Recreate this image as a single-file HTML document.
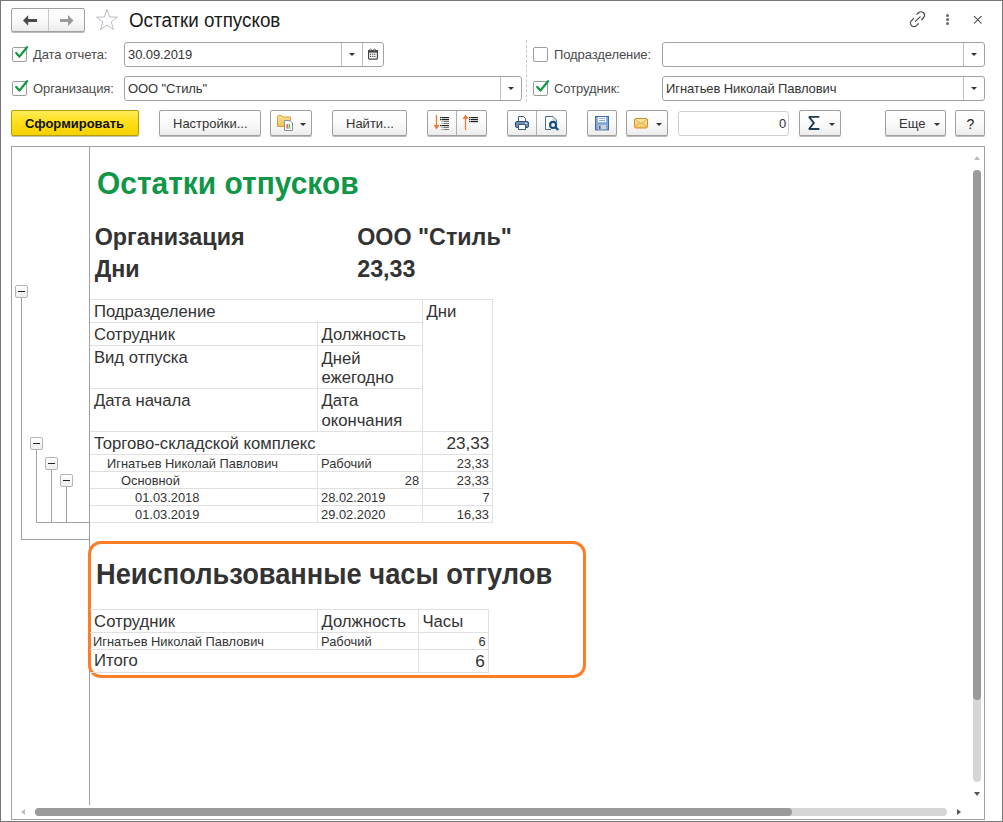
<!DOCTYPE html>
<html><head><meta charset="utf-8">
<style>
*{box-sizing:border-box;margin:0;padding:0}
html,body{width:1003px;height:822px;overflow:hidden;background:#fff;font-family:"Liberation Sans",sans-serif}
.a{position:absolute}
.t{position:absolute;white-space:nowrap;line-height:1}
#win{position:absolute;left:0;top:0;width:1003px;height:822px;border:1px solid #777;background:#fff}
.btn{position:absolute;border:1px solid #a0a0a0;border-radius:2px;background:linear-gradient(#fff 0%,#fafafa 50%,#ececec 100%);box-shadow:0 1px 0 rgba(0,0,0,.28)}
.inp{position:absolute;border:1px solid #a2a2a2;border-radius:3px;background:#fff}
.lbl{position:absolute;white-space:nowrap;line-height:1;font-size:13px;color:#4a4a4a;letter-spacing:-0.1px}
.cb{position:absolute;width:15px;height:15px;border:1px solid #9c9c9c;border-radius:2px;background:#fff}
.dd{position:absolute;width:0;height:0;border-left:3px solid transparent;border-right:3px solid transparent;border-top:3.2px solid #333}
.grid{position:absolute;background:#e0e0e0}
.tree{position:absolute;background:#a0a0a0}
.tb{position:absolute;width:13px;height:13px;border:1px solid #b5b5b5;border-radius:2px;background:linear-gradient(#fff,#eee)}
.tb:after{content:"";position:absolute;left:2px;top:5px;width:7px;height:1px;background:#222}
.rt{position:absolute;white-space:nowrap;line-height:1;color:#333}
</style></head><body>
<div id="win"></div>

<!-- nav -->
<div class="btn" style="left:11px;top:8px;width:74px;height:24px"></div>
<div class="a" style="left:48px;top:9px;width:1px;height:22px;background:#c8c8c8"></div>
<svg class="a" style="left:22px;top:14px" width="16" height="13" viewBox="0 0 16 13"><path d="M1 6.5 L6.2 1.2 L6.2 5 L15 5 L15 8 L6.2 8 L6.2 11.8 Z" fill="#4a4a4a"/></svg>
<svg class="a" style="left:58px;top:14px" width="16" height="13" viewBox="0 0 16 13"><path d="M15.5 6.5 L10 1 L10 5 L2 5 L2 8 L10 8 L10 12 Z" fill="#9a9a9a"/></svg>
<svg class="a" style="left:95px;top:8px" width="24" height="24" viewBox="0 0 24 24"><path d="M12 1.5 L14.6 9 L22.5 9.1 L16.2 13.9 L18.5 21.5 L12 17 L5.5 21.5 L7.8 13.9 L1.5 9.1 L9.4 9 Z" fill="none" stroke="#b8bcc4" stroke-width="1"/></svg>
<div class="t" style="left:128.7px;top:9.5px;font-size:20px;color:#1a1a1a;transform:scaleX(0.94);transform-origin:0 0">Остатки отпусков</div>
<svg class="a" style="left:909px;top:11px" width="18" height="18" viewBox="0 0 18 18"><g fill="none" stroke="#4a4a4a" stroke-width="1.25" stroke-linecap="round"><path d="M6.4 10.4 L11.1 5.9"/><path d="M7.9 3.4 L9.5 1.8 A3.5 3.5 0 0 1 14.5 6.8 L12.6 8.7"/><path d="M4.5 7.6 L2.5 9.6 A3.5 3.5 0 0 0 7.5 14.6 L9.3 12.8"/></g></svg>
<div class="a" style="left:946px;top:14px;width:3px;height:3px;border-radius:2px;background:#6a6a6a"></div>
<div class="a" style="left:946px;top:17.8px;width:3px;height:3px;border-radius:2px;background:#6a6a6a"></div>
<div class="a" style="left:946px;top:21.5px;width:3px;height:3px;border-radius:2px;background:#6a6a6a"></div>
<svg class="a" style="left:972px;top:14px" width="11" height="11" viewBox="0 0 11 11"><path d="M2 2 L9.5 9.5 M9.5 2 L2 9.5" stroke="#333" stroke-width="1.05"/></svg>

<!-- row1 -->
<div class="cb" style="left:12px;top:47px"></div>
<svg class="a" style="left:13px;top:44px" width="16" height="16" viewBox="0 0 16 16"><path d="M3.2 9 L6.4 12.6 L14 3.2" fill="none" stroke="#0f9a40" stroke-width="2.3" stroke-linecap="round" stroke-linejoin="round"/></svg>
<div class="lbl" style="left:33px;top:48px">Дата отчета:</div>
<div class="inp" style="left:124px;top:42px;width:260px;height:25px"></div>
<div class="a" style="left:341px;top:43px;width:1px;height:23px;background:#bdbdbd"></div>
<div class="a" style="left:362px;top:43px;width:1px;height:23px;background:#bdbdbd"></div>
<div class="dd" style="left:349px;top:53px"></div>
<svg class="a" style="left:367px;top:48px" width="11" height="12" viewBox="0 0 11 12"><rect x="1.6" y="2.6" width="8.8" height="8.6" rx="1" fill="#fff" stroke="#444" stroke-width="1.2"/><rect x="1" y="2" width="10" height="2.6" fill="#444"/><circle cx="3.6" cy="1.8" r="0.9" fill="#fff" stroke="#444" stroke-width="0.7"/><circle cx="7.6" cy="1.8" r="0.9" fill="#fff" stroke="#444" stroke-width="0.7"/><g fill="#444"><rect x="3" y="5.6" width="1.2" height="1.2"/><rect x="5.1" y="5.6" width="1.2" height="1.2"/><rect x="7.2" y="5.6" width="1.2" height="1.2"/><rect x="3" y="7.8" width="1.2" height="1.2"/><rect x="5.1" y="7.8" width="1.2" height="1.2"/><rect x="7.2" y="7.8" width="1.2" height="1.2"/></g></svg>
<div class="lbl" style="left:128px;top:48px;color:#333">30.09.2019</div>

<div class="a" style="left:526px;top:40px;width:0;height:62px;border-left:1px dashed #c8c8c8"></div>
<div class="cb" style="left:533px;top:47px"></div>
<div class="lbl" style="left:554px;top:48px">Подразделение:</div>
<div class="inp" style="left:662px;top:42px;width:323px;height:25px"></div>
<div class="a" style="left:963px;top:43px;width:1px;height:23px;background:#bdbdbd"></div>
<div class="dd" style="left:971px;top:53px"></div>

<!-- row2 -->
<div class="cb" style="left:12px;top:81px"></div>
<svg class="a" style="left:13px;top:78px" width="16" height="16" viewBox="0 0 16 16"><path d="M3.2 9 L6.4 12.6 L14 3.2" fill="none" stroke="#0f9a40" stroke-width="2.3" stroke-linecap="round" stroke-linejoin="round"/></svg>
<div class="lbl" style="left:33px;top:82px">Организация:</div>
<div class="inp" style="left:124px;top:76px;width:398px;height:25px"></div>
<div class="a" style="left:500px;top:77px;width:1px;height:23px;background:#bdbdbd"></div>
<div class="dd" style="left:508px;top:87px"></div>
<div class="lbl" style="left:128px;top:82px;color:#333">ООО "Стиль"</div>

<div class="cb" style="left:533px;top:81px"></div>
<svg class="a" style="left:534px;top:78px" width="16" height="16" viewBox="0 0 16 16"><path d="M3.2 9 L6.4 12.6 L14 3.2" fill="none" stroke="#0f9a40" stroke-width="2.3" stroke-linecap="round" stroke-linejoin="round"/></svg>
<div class="lbl" style="left:554px;top:82px">Сотрудник:</div>
<div class="inp" style="left:662px;top:76px;width:323px;height:25px"></div>
<div class="a" style="left:963px;top:77px;width:1px;height:23px;background:#bdbdbd"></div>
<div class="dd" style="left:971px;top:87px"></div>
<div class="lbl" style="left:666px;top:82px;color:#333">Игнатьев Николай Павлович</div>

<!-- toolbar -->
<div class="a" style="left:11px;top:110px;width:128px;height:26px;border:1px solid #b59c00;border-radius:2px;background:linear-gradient(#ffec5a 0%,#ffe01a 45%,#f3d000 100%);box-shadow:0 1px 0 rgba(60,50,0,.3)"></div>
<div class="t" style="left:25px;top:116.5px;font-size:13px;font-weight:bold;color:#111;transform:scaleY(1.05)">Сформировать</div>
<div class="btn" style="left:159px;top:110px;width:102px;height:26px"></div>
<div class="t" style="left:173px;top:117px;font-size:13px;color:#333">Настройки...</div>
<div class="btn" style="left:270px;top:110px;width:42px;height:26px"></div>
<svg class="a" style="left:276px;top:114px" width="20" height="18" viewBox="0 0 20 18"><defs><linearGradient id="fg" x1="0" y1="0" x2="0" y2="1"><stop offset="0" stop-color="#fbe08f"/><stop offset="1" stop-color="#efc25c"/></linearGradient></defs><path d="M1.5 12.5 V3 Q1.5 1.5 3 1.5 H5.5 L7 3 H14.5 V12.5 Z" fill="url(#fg)" stroke="#d8a23e" stroke-width="1"/><path d="M2 4.5 H14" stroke="#f7d885" stroke-width="1"/><path d="M8.5 6.5 H14 L16.5 9 V16.5 H8.5 Z" fill="#fff" stroke="#7d8fa0" stroke-width="1"/><rect x="10.6" y="10" width="1.2" height="4" fill="#f33"/><rect x="12.6" y="10" width="1.3" height="4" fill="#3c3"/><path d="M10 14.4 H15" stroke="#999" stroke-width="0.5"/></svg>
<div class="dd" style="left:300px;top:123px"></div>
<div class="btn" style="left:332px;top:110px;width:75px;height:26px"></div>
<div class="t" style="left:346px;top:117px;font-size:13px;color:#333">Найти...</div>
<div class="btn" style="left:427px;top:110px;width:60px;height:26px"></div>
<div class="a" style="left:456px;top:111px;width:1px;height:24px;background:#b0b0b0"></div>
<svg class="a" style="left:432px;top:114px" width="20" height="18" viewBox="0 0 20 18"><path d="M4.5 1 v13" stroke="#f07a30" stroke-width="1.3"/><path d="M1.5 11 L4.5 15.5 L7.5 11 z" fill="#f07a30"/><g fill="#222"><rect x="8" y="3" width="1.5" height="1.2"/><rect x="10" y="3" width="7" height="1.2"/><rect x="8" y="5" width="1.5" height="1.2"/><rect x="10" y="5" width="7" height="1.2"/><rect x="8" y="11" width="1.5" height="1.2"/><rect x="10" y="11" width="7" height="1.2"/></g><g fill="#777"><rect x="9.5" y="7" width="1" height="1"/><rect x="11.5" y="7" width="5.5" height="1"/><rect x="9.5" y="9" width="1" height="1"/><rect x="11.5" y="9" width="5.5" height="1"/><rect x="9.5" y="13" width="1" height="1"/><rect x="11.5" y="13" width="5.5" height="1"/><rect x="9.5" y="15" width="1" height="1"/><rect x="11.5" y="15" width="5.5" height="1"/></g></svg>
<svg class="a" style="left:461px;top:114px" width="20" height="18" viewBox="0 0 20 18"><path d="M4.5 3 v13" stroke="#f07a30" stroke-width="1.3"/><path d="M1.5 5 L4.5 0.5 L7.5 5 z" fill="#f07a30"/><g fill="#222"><rect x="8" y="3" width="1.5" height="1.2"/><rect x="10" y="3" width="7" height="1.2"/><rect x="8" y="5" width="1.5" height="1.2"/><rect x="10" y="5" width="7" height="1.2"/><rect x="8" y="7" width="1.5" height="1.2"/><rect x="10" y="7" width="7" height="1.2"/></g></svg>
<div class="btn" style="left:507px;top:110px;width:60px;height:26px"></div>
<div class="a" style="left:536px;top:111px;width:1px;height:24px;background:#b0b0b0"></div>
<svg class="a" style="left:514px;top:115px" width="16" height="16" viewBox="0 0 16 16"><path d="M4.5 1.5 h5 l2 2 v3 h-7 z" fill="#fff" stroke="#3d5d80" stroke-width="1"/><rect x="1.5" y="6.5" width="13" height="6" rx="1.5" fill="#6e90b8" stroke="#2e4f78" stroke-width="1"/><rect x="4.5" y="9.5" width="7" height="5" fill="#fff" stroke="#3d5d80" stroke-width="1"/><rect x="11" y="7.8" width="2" height="1" fill="#fff"/></svg>
<svg class="a" style="left:543px;top:115px" width="18" height="17" viewBox="0 0 18 17"><path d="M2.5 1.5 h7.5 l3.5 3.5 v9.5 h-11 z" fill="#fff"/><path d="M8 14.5 H2.5 V1.5 h7.5 l3.5 3.5 v2" fill="none" stroke="#4d6a88" stroke-width="1"/><path d="M10 1.5 v3.5 h3.5" fill="none" stroke="#9fb0c0" stroke-width="0.8"/><circle cx="10.1" cy="9.9" r="3" fill="#fff" stroke="#14507e" stroke-width="2.2"/><path d="M12.4 12.2 L15.2 15" stroke="#14507e" stroke-width="2.4"/></svg>
<div class="btn" style="left:587px;top:110px;width:30px;height:26px"></div>
<svg class="a" style="left:594px;top:115px" width="16" height="16" viewBox="0 0 16 16"><rect x="1.5" y="1.5" width="13" height="13.4" fill="#7da6da" stroke="#3e6aa6" stroke-width="1"/><rect x="3.8" y="2" width="8.4" height="5.2" fill="#fff"/><path d="M5 3.6 h6 M5 5.5 h6" stroke="#7aa2d6" stroke-width="0.9"/><rect x="3.8" y="9.8" width="8.4" height="4.6" fill="#cdd3d6"/><rect x="4.8" y="10.6" width="1.8" height="3.4" fill="#3e6aa6"/></svg>
<div class="btn" style="left:626px;top:110px;width:42px;height:26px"></div>
<svg class="a" style="left:633px;top:117px" width="16" height="12" viewBox="0 0 16 12"><defs><linearGradient id="eg" x1="0" y1="0" x2="0" y2="1"><stop offset="0" stop-color="#fde7ae"/><stop offset="1" stop-color="#f2c463"/></linearGradient></defs><rect x="1.5" y="1.5" width="13" height="9.5" rx="1.5" fill="url(#eg)" stroke="#d18d22" stroke-width="1"/><path d="M2.2 2.2 L8 6.8 L13.8 2.2 M2.5 10.3 L6.3 5.8 M13.5 10.3 L9.7 5.8" fill="none" stroke="#d9a047" stroke-width=".8"/></svg>
<div class="dd" style="left:656px;top:123px"></div>
<div class="a" style="left:678px;top:111px;width:111px;height:25px;border:1px solid #d0d0d0;border-radius:3px;background:#fff"></div>
<div class="t" style="left:779px;top:117px;font-size:13px;color:#333">0</div>
<div class="btn" style="left:799px;top:110px;width:42px;height:26px"></div>
<svg class="a" style="left:807px;top:115px" width="14" height="16" viewBox="0 0 14 16"><path d="M12.3 1.8 H2 L6.9 7.9 L2 14 H12.3" fill="none" stroke="#1f3a4d" stroke-width="1.85" stroke-linejoin="miter" stroke-miterlimit="2"/></svg>
<div class="dd" style="left:829px;top:123px"></div>
<div class="btn" style="left:885px;top:110px;width:61px;height:26px"></div>
<div class="t" style="left:899px;top:117px;font-size:13px;color:#333">Еще</div>
<div class="dd" style="left:934px;top:123px"></div>
<div class="btn" style="left:955px;top:110px;width:30px;height:26px"></div>
<div class="t" style="left:966.5px;top:116.5px;font-size:14px;color:#222">?</div>

<!-- report frame -->
<div class="a" style="left:11px;top:146px;width:974px;height:674px;border:1px solid #a0a0a0"></div>
<div class="a" style="left:89px;top:147px;width:1px;height:658px;background:#a0a0a0"></div>
<div class="a" style="left:974px;top:156px;width:0;height:0;border-left:3px solid transparent;border-right:3px solid transparent;border-bottom:4px solid #bdbdbd"></div>
<div class="a" style="left:973px;top:170px;width:8px;height:612px;border-radius:4px;background:#d6d6d6"></div>
<div class="a" style="left:973px;top:170px;width:8px;height:530px;border-radius:4px;background:#9a9a9a"></div>
<div class="a" style="left:974px;top:792px;width:0;height:0;border-left:3px solid transparent;border-right:3px solid transparent;border-top:4px solid #555"></div>
<div class="a" style="left:21px;top:809px;width:0;height:0;border-top:3px solid transparent;border-bottom:3px solid transparent;border-right:4px solid #bdbdbd"></div>
<div class="a" style="left:35px;top:808px;width:912px;height:8px;border-radius:4px;background:#d6d6d6"></div>
<div class="a" style="left:35px;top:808px;width:757px;height:8px;border-radius:4px;background:#9a9a9a"></div>
<div class="a" style="left:957px;top:809px;width:0;height:0;border-top:3px solid transparent;border-bottom:3px solid transparent;border-left:4px solid #555"></div>

<!-- report -->
<div class="a" style="left:88px;top:541px;width:498px;height:137px;border:3px solid #fd7c26;border-radius:13px;background:#fff"></div>
<div class="grid" style="left:90px;top:299px;width:403px;height:1px"></div>
<div class="grid" style="left:90px;top:322px;width:332px;height:1px"></div>
<div class="grid" style="left:90px;top:345px;width:332px;height:1px"></div>
<div class="grid" style="left:90px;top:388px;width:332px;height:1px"></div>
<div class="grid" style="left:90px;top:431px;width:403px;height:1px"></div>
<div class="grid" style="left:90px;top:454px;width:403px;height:1px"></div>
<div class="grid" style="left:90px;top:471px;width:403px;height:1px"></div>
<div class="grid" style="left:90px;top:488px;width:403px;height:1px"></div>
<div class="grid" style="left:90px;top:505px;width:403px;height:1px"></div>
<div class="grid" style="left:90px;top:522px;width:403px;height:1px"></div>
<div class="grid" style="left:317px;top:322px;width:1px;height:110px"></div>
<div class="grid" style="left:317px;top:454px;width:1px;height:69px"></div>
<div class="grid" style="left:422px;top:299px;width:1px;height:224px"></div>
<div class="grid" style="left:492px;top:299px;width:1px;height:224px"></div>
<div class="grid" style="left:90px;top:609px;width:399px;height:1px"></div>
<div class="grid" style="left:90px;top:632px;width:399px;height:1px"></div>
<div class="grid" style="left:90px;top:649px;width:399px;height:1px"></div>
<div class="grid" style="left:90px;top:672px;width:399px;height:1px"></div>
<div class="grid" style="left:317px;top:609px;width:1px;height:41px"></div>
<div class="grid" style="left:418px;top:609px;width:1px;height:64px"></div>
<div class="grid" style="left:488px;top:609px;width:1px;height:64px"></div>
<div class="tree" style="left:21px;top:297px;width:1px;height:243px"></div>
<div class="tree" style="left:21px;top:539px;width:69px;height:1px"></div>
<div class="tree" style="left:36px;top:449px;width:1px;height:74px"></div>
<div class="tree" style="left:36px;top:522px;width:54px;height:1px"></div>
<div class="tree" style="left:51px;top:469px;width:1px;height:53px"></div>
<div class="tree" style="left:66px;top:486px;width:1px;height:36px"></div>
<div class="tb" style="left:15px;top:285px"></div>
<div class="tb" style="left:30px;top:437px"></div>
<div class="tb" style="left:45px;top:457px"></div>
<div class="tb" style="left:60px;top:474px"></div>
<div class="rt" style="left:96.9px;top:166.2px;font-size:32px;font-weight:bold;color:#0f9646;line-height:35.74px;transform:scaleX(0.935);transform-origin:0 0">Остатки отпусков</div>
<div class="rt" style="left:94.7px;top:224.4px;font-size:23.3px;font-weight:bold;color:#333;line-height:26.03px;">Организация</div>
<div class="rt" style="left:94.7px;top:256.2px;font-size:23.3px;font-weight:bold;color:#333;line-height:26.03px;">Дни</div>
<div class="rt" style="left:357.2px;top:224.4px;font-size:23.3px;font-weight:bold;color:#333;line-height:26.03px;">ООО "Стиль"</div>
<div class="rt" style="left:357.2px;top:255.9px;font-size:23.3px;font-weight:bold;color:#333;line-height:26.03px;">23,33</div>
<div class="rt" style="left:93.9px;top:302.9px;font-size:16.7px;color:#333;line-height:18.65px;">Подразделение</div>
<div class="rt" style="left:426.4px;top:302.9px;font-size:16.7px;color:#333;line-height:18.65px;">Дни</div>
<div class="rt" style="left:93.9px;top:325.9px;font-size:16.7px;color:#333;line-height:18.65px;">Сотрудник</div>
<div class="rt" style="left:321.4px;top:325.9px;font-size:16.7px;color:#333;line-height:18.65px;">Должность</div>
<div class="rt" style="left:93.9px;top:349.1px;font-size:16.7px;color:#333;line-height:18.65px;">Вид отпуска</div>
<div class="rt" style="left:321.4px;top:349.9px;font-size:16.7px;color:#333;line-height:18.65px;">Дней</div>
<div class="rt" style="left:321.4px;top:369.4px;font-size:16.7px;color:#333;line-height:18.65px;">ежегодно</div>
<div class="rt" style="left:93.9px;top:391.9px;font-size:16.7px;color:#333;line-height:18.65px;">Дата начала</div>
<div class="rt" style="left:321.4px;top:392.4px;font-size:16.7px;color:#333;line-height:18.65px;">Дата</div>
<div class="rt" style="left:321.4px;top:411.9px;font-size:16.7px;color:#333;line-height:18.65px;">окончания</div>
<div class="rt" style="left:93.9px;top:434.5px;font-size:16.7px;color:#333;line-height:18.65px;">Торгово-складской комплекс</div>
<div class="rt" style="right:513.6px;top:434.0px;font-size:17.2px;color:#333;line-height:19.21px;">23,33</div>
<div class="rt" style="left:107.1px;top:455.8px;font-size:13.6px;transform:scaleX(0.946);transform-origin:0 0;color:#333;line-height:15.19px;">Игнатьев Николай Павлович</div>
<div class="rt" style="left:320.9px;top:455.8px;font-size:13.6px;transform:scaleX(0.946);transform-origin:0 0;color:#333;line-height:15.19px;">Рабочий</div>
<div class="rt" style="right:513.6px;top:455.8px;font-size:13.6px;transform:scaleX(0.946);transform-origin:100% 0;color:#333;line-height:15.19px;">23,33</div>
<div class="rt" style="left:120.7px;top:472.8px;font-size:13.6px;transform:scaleX(0.946);transform-origin:0 0;color:#333;line-height:15.19px;">Основной</div>
<div class="rt" style="right:513.6px;top:472.8px;font-size:13.6px;transform:scaleX(0.946);transform-origin:100% 0;color:#333;line-height:15.19px;">23,33</div>
<div class="rt" style="left:135.4px;top:489.5px;font-size:13.6px;transform:scaleX(0.946);transform-origin:0 0;color:#333;line-height:15.19px;">01.03.2018</div>
<div class="rt" style="left:320.9px;top:489.5px;font-size:13.6px;transform:scaleX(0.946);transform-origin:0 0;color:#333;line-height:15.19px;">28.02.2019</div>
<div class="rt" style="right:513.6px;top:489.5px;font-size:13.6px;transform:scaleX(0.946);transform-origin:100% 0;color:#333;line-height:15.19px;">7</div>
<div class="rt" style="left:135.4px;top:506.6px;font-size:13.6px;transform:scaleX(0.946);transform-origin:0 0;color:#333;line-height:15.19px;">01.03.2019</div>
<div class="rt" style="left:320.9px;top:506.6px;font-size:13.6px;transform:scaleX(0.946);transform-origin:0 0;color:#333;line-height:15.19px;">29.02.2020</div>
<div class="rt" style="right:513.6px;top:506.6px;font-size:13.6px;transform:scaleX(0.946);transform-origin:100% 0;color:#333;line-height:15.19px;">16,33</div>
<div class="rt" style="right:583.6px;top:472.8px;font-size:13.6px;transform:scaleX(0.946);transform-origin:100% 0;color:#333;line-height:15.19px;">28</div>
<div class="rt" style="left:96.4px;top:558.4px;font-size:29px;font-weight:bold;color:#333;line-height:32.39px;transform:scaleX(0.94);transform-origin:0 0">Неиспользованные часы отгулов</div>
<div class="rt" style="left:94.1px;top:612.5px;font-size:16.7px;color:#333;line-height:18.65px;">Сотрудник</div>
<div class="rt" style="left:321.4px;top:612.5px;font-size:16.7px;color:#333;line-height:18.65px;">Должность</div>
<div class="rt" style="left:422.4px;top:612.5px;font-size:16.7px;color:#333;line-height:18.65px;">Часы</div>
<div class="rt" style="left:93.0px;top:633.5px;font-size:13.6px;transform:scaleX(0.946);transform-origin:0 0;color:#333;line-height:15.19px;">Игнатьев Николай Павлович</div>
<div class="rt" style="left:320.7px;top:633.5px;font-size:13.6px;transform:scaleX(0.946);transform-origin:0 0;color:#333;line-height:15.19px;">Рабочий</div>
<div class="rt" style="right:517.1px;top:633.5px;font-size:13.6px;transform:scaleX(0.946);transform-origin:100% 0;color:#333;line-height:15.19px;">6</div>
<div class="rt" style="left:94.0px;top:652.3px;font-size:16.7px;color:#333;line-height:18.65px;">Итого</div>
<div class="rt" style="right:518.1px;top:651.8px;font-size:17.2px;color:#333;line-height:19.21px;">6</div>

</body></html>
